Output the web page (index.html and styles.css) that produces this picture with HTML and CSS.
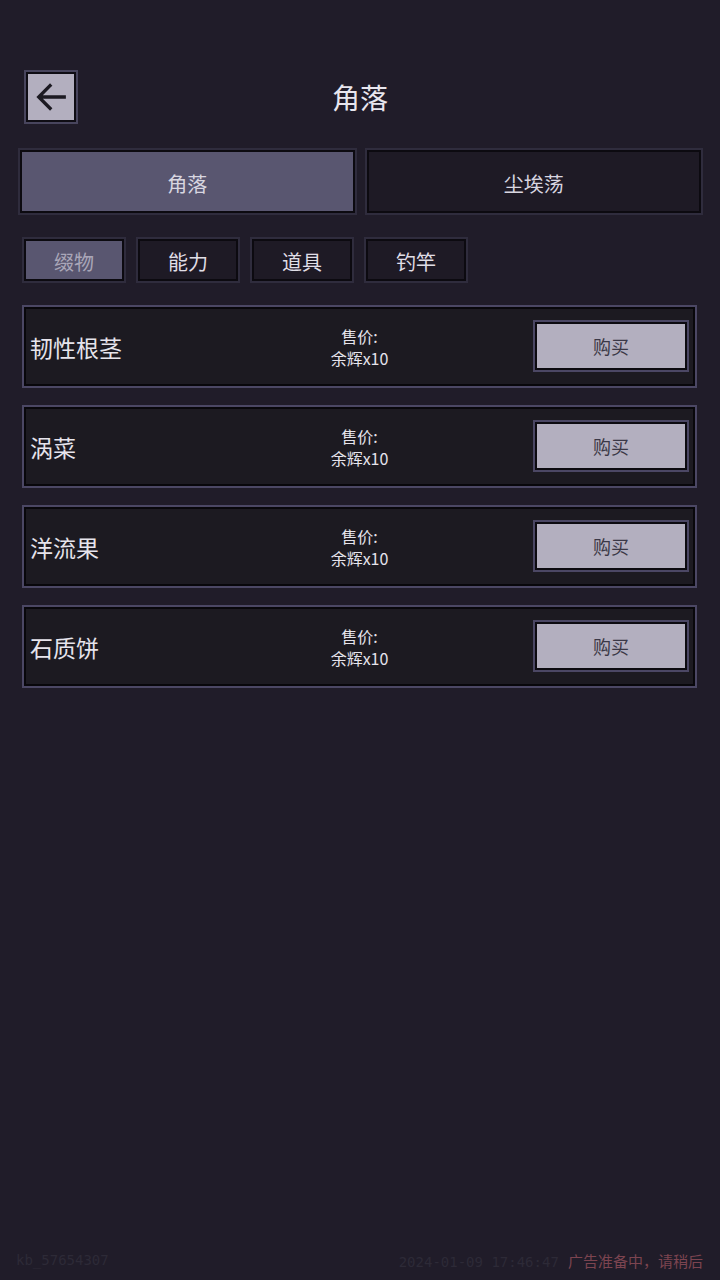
FILE: index.html
```html
<!DOCTYPE html>
<html lang="zh-CN">
<head>
    <meta charset="UTF-8">
    <meta name="viewport" content="width=device-width, initial-scale=1.0">
    <title>角落</title>
    <link rel="stylesheet" href="styles.css">
</head>
<body>
    <div class="page">
        <header class="header">
            <button class="back-btn" aria-label="返回">
                <svg width="34" height="34" viewBox="0 0 36 36">
                    <path d="M32 18 H6 M17 6 L5 18 L17 30" fill="none" stroke="#1c1a22" stroke-width="3.5" stroke-linecap="square"/>
                </svg>
            </button>
            <h1 class="title">角落</h1>
        </header>

        <div class="main-tabs">
            <div class="main-tab active">角落</div>
            <div class="main-tab">尘埃荡</div>
        </div>

        <div class="sub-tabs">
            <div class="sub-tab active">缀物</div>
            <div class="sub-tab">能力</div>
            <div class="sub-tab">道具</div>
            <div class="sub-tab">钓竿</div>
        </div>

        <div class="item-list">
            <div class="item">
                <div class="item-name">韧性根茎</div>
                <div class="item-price">
                    <span>售价:</span>
                    <span>余辉x10</span>
                </div>
                <button class="buy-btn">购买</button>
            </div>
            <div class="item">
                <div class="item-name">涡菜</div>
                <div class="item-price">
                    <span>售价:</span>
                    <span>余辉x10</span>
                </div>
                <button class="buy-btn">购买</button>
            </div>
            <div class="item">
                <div class="item-name">洋流果</div>
                <div class="item-price">
                    <span>售价:</span>
                    <span>余辉x10</span>
                </div>
                <button class="buy-btn">购买</button>
            </div>
            <div class="item">
                <div class="item-name">石质饼</div>
                <div class="item-price">
                    <span>售价:</span>
                    <span>余辉x10</span>
                </div>
                <button class="buy-btn">购买</button>
            </div>
        </div>

        <footer class="footer">
            <span class="user-id">kb_57654307</span>
            <span class="footer-right">
                <span class="timestamp">2024-01-09 17:46:47</span>
                <span class="ad-note">广告准备中，请稍后</span>
            </span>
        </footer>
    </div>
</body>
</html>
```

FILE: styles.css
```css
* {
    box-sizing: border-box;
}

body {
    margin: 0;
    padding: 0;
    background: #201c29;
    font-family: "Noto Sans CJK SC", "DejaVu Sans Mono", sans-serif;
    color: #e4e2ea;
}

.page {
    min-height: 1280px;
    display: flex;
    flex-direction: column;
    padding-top: 70px;
}

.header {
    position: relative;
    height: 54px;
    display: flex;
    align-items: center;
    justify-content: center;
}

.back-btn {
    position: absolute;
    left: 26px;
    top: 2px;
    width: 50px;
    height: 50px;
    padding: 0;
    background: #b3afbf;
    border: 2px solid #0f0d14;
    box-shadow: 0 0 0 2px #48455d;
    display: flex;
    align-items: center;
    justify-content: center;
}

.title {
    margin: 0;
    font-size: 28px;
    font-weight: normal;
    color: #e8e6ee;
    line-height: 54px;
}

.main-tabs {
    display: flex;
    gap: 12px;
    margin: 26px 19px 0 20px;
}

.main-tab {
    flex: 1;
    height: 63px;
    display: flex;
    align-items: center;
    justify-content: center;
    padding-top: 3px;
    font-size: 20px;
    color: #d8d6e0;
    background: #1e1a25;
    border: 2px solid #0c0a10;
    box-shadow: 0 0 0 2px #2f2c3d;
}

.main-tab.active {
    background: #595670;
}

.sub-tabs {
    display: flex;
    gap: 14px;
    margin: 26px 0 0 24px;
}

.sub-tab {
    width: 100px;
    height: 42px;
    display: flex;
    align-items: center;
    justify-content: center;
    padding-top: 2px;
    font-size: 20px;
    color: #e0dee6;
    background: #1e1a25;
    border: 2px solid #0c0a10;
    box-shadow: 0 0 0 2px #2f2c3d;
}

.sub-tab.active {
    background: #595670;
    color: #a9a6b8;
}

.item-list {
    display: flex;
    flex-direction: column;
    gap: 21px;
    margin: 26px 25px 0 24px;
}

.item {
    height: 79px;
    display: flex;
    align-items: center;
    padding: 0 6px 0 4px;
    background: #1c1a21;
    border: 2px solid #08070b;
    box-shadow: 0 0 0 2px #4b4764;
}

.item-name {
    width: 210px;
    font-size: 23px;
    color: #e6e4ec;
}

.item-price {
    flex: 1;
    display: flex;
    flex-direction: column;
    align-items: center;
    font-size: 16px;
    line-height: 22px;
    color: #e6e4ec;
    padding-right: 56px;
}

.buy-btn {
    width: 152px;
    height: 48px;
    margin-bottom: 2px;
    font-family: inherit;
    font-size: 18px;
    color: #3b3846;
    background: #b3afbf;
    border: 2px solid #0c0a10;
    box-shadow: 0 0 0 2px #4b4764;
}

.footer {
    margin-top: auto;
    height: 40px;
    display: flex;
    justify-content: space-between;
    align-items: center;
    padding: 0 17px 0 16px;
    font-size: 14px;
}

.user-id {
    color: #2d2a37;
    font-family: "DejaVu Sans Mono", monospace;
}

.timestamp {
    color: #2d2a37;
    font-family: "DejaVu Sans Mono", monospace;
    margin-right: 6px;
}

.ad-note {
    color: #7c4450;
    font-size: 15px;
}
```
